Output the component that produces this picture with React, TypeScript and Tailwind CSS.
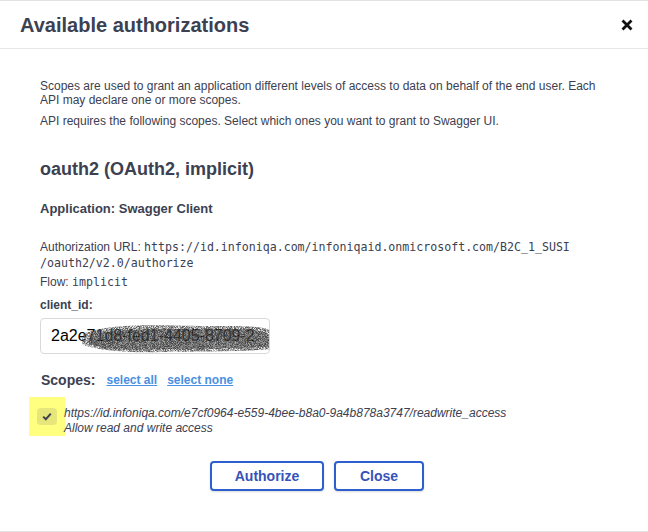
import React from "react";

function Scribble() {
  return (
    <svg
      className="absolute left-[40px] top-[2px] pointer-events-none"
      width="192"
      height="34"
      viewBox="0 0 192 34"
    >
      <defs>
        <filter id="noise" x="0" y="0" width="100%" height="100%">
          <feTurbulence type="fractalNoise" baseFrequency="1.3" numOctaves="2" seed="5" result="t" />
          <feColorMatrix
            in="t"
            type="matrix"
            values="0 0 0 0 0.1  0 0 0 0 0.1  0 0 0 0 0.1  0 0 0 2.6 -0.7"
            result="n"
          />
          <feComposite in="n" in2="SourceGraphic" operator="in" />
        </filter>
      </defs>
      <path
        d="M4 12 C 30 2, 80 4, 120 5 C 150 5, 175 4, 190 9 L 190 28 C 160 31, 120 30, 80 31 C 50 32, 20 30, 2 24 C 0 18, 1 14, 4 12 Z"
        fill="#000"
        filter="url(#noise)"
      />
      <path
        d="M10 13 C 50 6, 100 8, 150 8 C 170 8, 182 10, 188 14 L 188 26 C 150 28, 100 28, 60 29 C 35 29, 16 27, 8 22 Z"
        fill="#2a2a2a"
        opacity="0.4"
      />
    </svg>
  );
}

export default function App() {
  return (
    <div
      className="w-[648px] h-[532px] bg-white border-t border-b border-[#e2e2e2] overflow-hidden text-[#3b4151]"
      style={{ fontFamily: '"Liberation Sans", Arial, sans-serif' }}
    >
      <div className="h-[48px] flex items-center justify-between pl-[20px] pr-[15px] border-b border-[#e6e6e6]">
        <h3 className="text-[20px] font-bold text-[#3b4151] leading-none">Available authorizations</h3>
        <svg width="12" height="12" viewBox="0 0 12 12">
          <path d="M1.5 1.5 L10.5 10.5 M10.5 1.5 L1.5 10.5" stroke="#111" strokeWidth="2.8" strokeLinecap="butt" />
        </svg>
      </div>

      <div className="pl-[40px] pt-[30px]">
        <p className="text-[12px] leading-[14px] w-[572px]">
          Scopes are used to grant an application different levels of access to data on behalf of the end user. Each API may declare one or more scopes.
        </p>
        <p className="text-[12px] leading-[14px] mt-[7px]">
          API requires the following scopes. Select which ones you want to grant to Swagger UI.
        </p>

        <h4 className="text-[18px] font-bold leading-[22px] mt-[30px]">oauth2 (OAuth2, implicit)</h4>

        <h6 className="text-[13px] font-bold leading-[16px] mt-[21px]">Application: Swagger Client</h6>

        <p className="text-[12px] leading-[16px] mt-[22px]">
          Authorization URL:{" "}
          <code className="text-[11.6px]" style={{ fontFamily: '"DejaVu Sans Mono", monospace' }}>
            https://id.infoniqa.com/infoniqaid.onmicrosoft.com/B2C_1_SUSI
            <br />
            /oauth2/v2.0/authorize
          </code>
        </p>
        <p className="text-[12px] leading-[16px] mt-[3px]">
          Flow:{" "}
          <code className="text-[11.6px]" style={{ fontFamily: '"DejaVu Sans Mono", monospace' }}>
            implicit
          </code>
        </p>

        <label className="block text-[12px] font-bold leading-[16px] mt-[7px]">client_id:</label>
        <div className="relative mt-[5px] w-[230px] h-[36px] border border-[#d9d9d9] rounded-[4px] overflow-hidden flex items-center pl-[10px]">
          <span className="text-[16px] text-black whitespace-nowrap">2a2e71d8-fed1-4405-8709-2</span>
          <Scribble />
        </div>

        <div className="flex items-center mt-[17px] h-[18px] pl-[1px]">
          <span className="text-[14px] font-bold">Scopes:</span>
          <a className="ml-[11px] text-[12px] font-bold text-[#4990e2] underline">select all</a>
          <a className="ml-[10px] text-[12px] font-bold text-[#4990e2] underline">select none</a>
        </div>

        <div className="flex mt-[8px] -ml-[11px]">
          <div className="w-[36px] h-[39px] bg-[#ffff80] flex items-center justify-center shrink-0">
            <div className="w-[20px] h-[17px] rounded-[4px] bg-[#e6e67a] flex items-center justify-center">
              <svg width="10" height="9" viewBox="0 0 10 9">
                <path d="M1.2 4.6 L3.8 7.2 L8.8 1.6" stroke="#41444e" strokeWidth="2" fill="none" />
              </svg>
            </div>
          </div>
          <div className="pt-[9px] -ml-[1px] text-[12px] italic leading-[15px]">
            <div>https://id.infoniqa.com/e7cf0964-e559-4bee-b8a0-9a4b878a3747/readwrite_access</div>
            <div>Allow read and write access</div>
          </div>
        </div>

        <div className="flex justify-center gap-[10px] mt-[25px] -ml-[40px] w-[634px]">
          <button className="w-[114px] h-[30px] border-2 border-[#2d5fcf] rounded-[4px] text-[14px] font-bold text-[#3553b8] shadow-[0_1px_2px_rgba(0,0,0,0.15)] bg-white">
            Authorize
          </button>
          <button className="w-[90px] h-[30px] border-2 border-[#2d5fcf] rounded-[4px] text-[14px] font-bold text-[#3553b8] shadow-[0_1px_2px_rgba(0,0,0,0.15)] bg-white">
            Close
          </button>
        </div>
      </div>
    </div>
  );
}
